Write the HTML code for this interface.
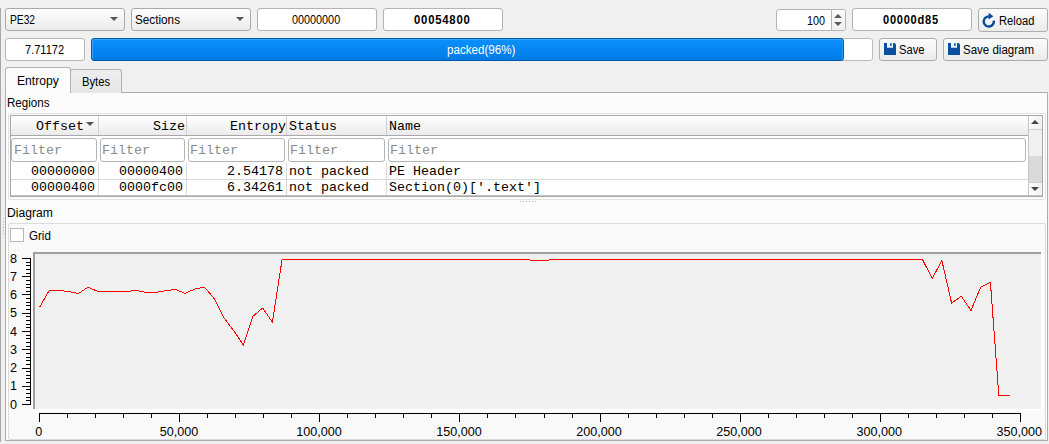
<!DOCTYPE html>
<html><head><meta charset="utf-8">
<style>
*{box-sizing:border-box;margin:0;padding:0}
html,body{width:1049px;height:444px;overflow:hidden;background:#f0f0f0}
body{position:relative;font-family:"Liberation Sans",sans-serif;font-size:11.5px;color:#000}
.a{position:absolute}
.cb{position:absolute;border:1px solid #a9a9a9;border-radius:3px;background:linear-gradient(#fdfdfd,#ececec)}
.le{position:absolute;border:1px solid #b4b4b4;border-radius:3px;background:#fff}
.btn{position:absolute;border:1px solid #adadad;border-radius:3px;background:linear-gradient(#fcfcfc,#ebebeb)}
.t{position:absolute;white-space:pre;line-height:1}
.s{font-size:12px;transform-origin:0 0}
.mono{font-family:"Liberation Mono",monospace;font-size:13.33px}
.arr{position:absolute;width:0;height:0;border-left:4px solid transparent;border-right:4px solid transparent;border-top:4px solid #555}
</style></head><body>
<!-- left edge -->
<div class="a" style="left:0;top:8px;width:1px;height:434px;background:#a8a8a8"></div>

<!-- top row -->
<div class="cb" style="left:5px;top:8px;width:120px;height:23px"></div>
<div class="t s" style="left:9.95px;top:14px;transform:scaleX(0.854)">PE32</div>
<div class="arr" style="left:109.5px;top:17px"></div>

<div class="cb" style="left:131px;top:8px;width:120px;height:23px"></div>
<div class="t s" style="left:135.02px;top:14px;transform:scaleX(0.978)">Sections</div>
<div class="arr" style="left:235.5px;top:17px"></div>

<div class="le" style="left:257px;top:8px;width:120px;height:23px"></div>
<div class="t s" style="left:292.2px;top:14px;transform:scaleX(0.902)">00000000</div>

<div class="le" style="left:383px;top:8px;width:120px;height:23px"></div>
<div class="t s" style="left:413.9px;top:14px;transform:scaleX(0.946);font-weight:bold;letter-spacing:0.8px">00054800</div>

<div class="le" style="left:776px;top:9px;width:70px;height:22px"></div>
<div class="t s" style="left:807.0px;top:15px;transform:scaleX(0.9)">100</div>
<div class="a" style="left:831px;top:10px;width:14px;height:20px;border-left:1px solid #b4b4b4;background:linear-gradient(#fcfcfc,#eeeeee);border-radius:0 2px 2px 0"></div>
<div class="a" style="left:834px;top:14px;width:0;height:0;border-left:4px solid transparent;border-right:4px solid transparent;border-bottom:4px solid #5a5a5a"></div>
<div class="arr" style="left:834px;top:22px;border-top-color:#5a5a5a"></div>

<div class="le" style="left:852px;top:8px;width:120px;height:23px"></div>
<div class="t s" style="left:883.3px;top:14px;transform:scaleX(0.923);font-weight:bold;letter-spacing:0.8px">00000d85</div>

<div class="btn" style="left:978px;top:8px;width:70px;height:24px"></div>
<div class="t s" style="left:998.87px;top:15px;transform:scaleX(0.932)">Reload</div>

<!-- row 2 -->
<div class="le" style="left:5px;top:38px;width:80px;height:23px"></div>
<div class="t s" style="left:25.2px;top:44px;transform:scaleX(0.921)">7.71172</div>

<div class="a" style="left:91px;top:38px;width:782px;height:23px;border:1px solid #bcbcbc;border-radius:3px;background:#fff"></div>
<div class="a" style="left:91px;top:38px;width:753px;height:23px;border:1px solid #0059ab;border-radius:3px;background:linear-gradient(#0b90fb,#0786f3 50%,#007be4);box-shadow:inset 1px 1px 0 #3aa4ff,inset -1px 0 0 #2a9cff"></div>
<div class="t s" style="left:447.3px;top:44px;transform:scaleX(0.967);color:#fff">packed(96%)</div>

<div class="btn" style="left:879px;top:38px;width:58px;height:23px"></div>
<div class="t s" style="left:899.07px;top:44px;transform:scaleX(0.935)">Save</div>

<div class="btn" style="left:943px;top:38px;width:105px;height:23px"></div>
<div class="t s" style="left:963.04px;top:44px;transform:scaleX(0.959)">Save diagram</div>

<svg class="a" style="left:0;top:0" width="1049" height="70">
<path d="M988.8 16.4 A5.1 5.1 0 1 0 993.8 20.6" fill="none" stroke="#0d4c9c" stroke-width="2.5"/>
<path d="M988.6 12.8 L993.4 16.2 L988.6 19.6 Z" fill="#0d4c9c"/>
<g fill="#0b4fa3">
<path d="M884 43 H894.5 L896 44.5 V55 H884 Z M887 43 V47.8 H893 V43 Z" fill-rule="evenodd"/>
<rect x="890" y="43.3" width="1.7" height="2.5"/>
<path d="M948 43 H958.5 L960 44.5 V55 H948 Z M951 43 V47.8 H957 V43 Z" fill-rule="evenodd"/>
<rect x="954" y="43.3" width="1.7" height="2.5"/>
</g>
</svg>
<!-- tabs -->
<div class="a" style="left:5px;top:92px;width:1043px;height:349px;border:1px solid #acacac;background:#fcfcfc"></div>
<div class="a" style="left:70px;top:69px;width:52px;height:24px;border:1px solid #b4b4b4;border-bottom:none;background:linear-gradient(#eeeeee,#e6e6e6);border-radius:3px 3px 0 0"></div>
<div class="a" style="left:5px;top:67px;width:66px;height:26px;border:1px solid #b4b4b4;border-bottom:none;background:#fcfcfc;border-radius:3px 3px 0 0"></div>
<div class="t s" style="left:17.39px;top:75px;transform:scaleX(1.012)">Entropy</div>
<div class="t s" style="left:81.67px;top:76px;transform:scaleX(0.934)">Bytes</div>

<div class="t s" style="left:7.43px;top:97px;transform:scaleX(0.965)">Regions</div>

<!-- table -->
<div class="a" style="left:8px;top:113px;width:1038px;height:87px;border:1px solid #e2e2e2;border-radius:2px"></div>
<div class="a" style="left:10px;top:115px;width:1033px;height:82px;border:1px solid #a8a8a8;background:#fff"></div>
<div class="a" style="left:11px;top:116px;width:1017px;height:19px;background:linear-gradient(#ffffff,#ebebeb)"></div>
<div class="a" style="left:11px;top:135px;width:1017px;height:1px;background:#a8a8a8"></div>
<div class="a" style="left:98px;top:116px;width:1px;height:19px;background:#d0d0d0"></div>
<div class="a" style="left:186px;top:116px;width:1px;height:19px;background:#d0d0d0"></div>
<div class="a" style="left:286px;top:116px;width:1px;height:19px;background:#d0d0d0"></div>
<div class="a" style="left:386px;top:116px;width:1px;height:19px;background:#d0d0d0"></div>
<div class="t mono" style="left:11px;width:73px;text-align:right;top:120px">Offset</div>
<div class="arr" style="left:86px;top:122px;border-left-width:4px;border-right-width:4px;border-top-width:4px"></div>
<div class="t mono" style="left:99px;width:86px;text-align:right;top:120px">Size</div>
<div class="t mono" style="left:187px;width:99px;text-align:right;top:120px">Entropy</div>
<div class="t mono" style="left:289px;top:120px">Status</div>
<div class="t mono" style="left:389px;top:120px">Name</div>
<!-- filters -->
<div class="le" style="left:11px;top:138px;width:86px;height:24px"></div>
<div class="le" style="left:100px;top:138px;width:85px;height:24px"></div>
<div class="le" style="left:188px;top:138px;width:97px;height:24px"></div>
<div class="le" style="left:288px;top:138px;width:97px;height:24px"></div>
<div class="le" style="left:388px;top:138px;width:638px;height:24px"></div>
<div class="t mono" style="left:14px;top:144px;color:#8a8a8a">Filter</div>
<div class="t mono" style="left:102px;top:144px;color:#8a8a8a">Filter</div>
<div class="t mono" style="left:190px;top:144px;color:#8a8a8a">Filter</div>
<div class="t mono" style="left:290px;top:144px;color:#8a8a8a">Filter</div>
<div class="t mono" style="left:390px;top:144px;color:#8a8a8a">Filter</div>
<!-- rows -->
<div class="a" style="left:11px;top:179px;width:1017px;height:1px;background:#d8d8d8"></div>
<div class="a" style="left:98px;top:163px;width:1px;height:33px;background:#d8d8d8"></div>
<div class="a" style="left:186px;top:163px;width:1px;height:33px;background:#d8d8d8"></div>
<div class="a" style="left:286px;top:163px;width:1px;height:33px;background:#d8d8d8"></div>
<div class="a" style="left:386px;top:163px;width:1px;height:33px;background:#d8d8d8"></div>
<div class="t mono" style="left:11px;width:84px;text-align:right;top:165px">00000000</div>
<div class="t mono" style="left:99px;width:84px;text-align:right;top:165px">00000400</div>
<div class="t mono" style="left:187px;width:96px;text-align:right;top:165px">2.54178</div>
<div class="t mono" style="left:289px;top:165px">not packed</div>
<div class="t mono" style="left:389px;top:165px">PE Header</div>
<div class="t mono" style="left:11px;width:84px;text-align:right;top:181px">00000400</div>
<div class="t mono" style="left:99px;width:84px;text-align:right;top:181px">0000fc00</div>
<div class="t mono" style="left:187px;width:96px;text-align:right;top:181px">6.34261</div>
<div class="t mono" style="left:289px;top:181px">not packed</div>
<div class="t mono" style="left:389px;top:181px">Section(0)['.text']</div>
<!-- scrollbar -->
<div class="a" style="left:1028px;top:116px;width:14px;height:80px;background:#f0f0f0;border-left:1px solid #c6c6c6"></div>
<div class="a" style="left:1028px;top:116px;width:14px;height:14px;background:linear-gradient(90deg,#fdfdfd,#f2f2f2);border-left:1px solid #c6c6c6;border-bottom:1px solid #d0d0d0"></div>
<div class="a" style="left:1031px;top:120px;width:0;height:0;border-left:4px solid transparent;border-right:4px solid transparent;border-bottom:4px solid #444"></div>
<div class="a" style="left:1029px;top:156px;width:13px;height:26px;background:#dadada"></div>
<div class="a" style="left:1028px;top:182px;width:14px;height:14px;background:linear-gradient(90deg,#fdfdfd,#f2f2f2);border-left:1px solid #c6c6c6;border-top:1px solid #d0d0d0"></div>
<div class="arr" style="left:1031px;top:187px;border-top-color:#444"></div>
<div class="a" style="left:11px;top:195px;width:1031px;height:1px;background:#c2c2c2"></div>
<!-- splitter dots -->
<div class="a" style="left:520px;top:201px;width:17px;height:1px;background:repeating-linear-gradient(90deg,#b0b0b0 0 1px,transparent 1px 3px)"></div>

<div class="a" style="left:3px;top:218px;width:1px;height:17px;background:repeating-linear-gradient(180deg,#b4b4b4 0 1px,transparent 1px 3px)"></div>
<div class="t s" style="left:7.39px;top:207px;transform:scaleX(1.009)">Diagram</div>
<!-- group box -->
<div class="a" style="left:8px;top:223px;width:1038px;height:217px;border:1px solid #dcdcdc;border-radius:2px;background:#f9f9f9"></div>
<div class="a" style="left:10px;top:228px;width:14px;height:14px;border:1px solid #b8b8b8;background:#fff"></div>
<div class="t s" style="left:29.4px;top:230px;transform:scaleX(0.964)">Grid</div>

<!-- chart -->
<svg class="a" style="left:0;top:0" width="1049" height="444">
<rect x="33" y="252" width="1010" height="159" fill="#ffffff"/>
<rect x="33" y="252" width="1008" height="157" fill="#a0a0a0"/>
<rect x="35" y="254" width="1006" height="155" fill="#f0f0f0"/>
<polyline points="39.5,307.4 49.2,290.5 58.9,290.5 68.6,291.4 78.3,293.6 88.0,287.2 97.7,291.4 107.4,291.4 117.1,291.4 126.8,291.4 136.5,290.5 146.2,292.4 155.9,292.4 165.6,290.7 175.3,289.4 185.0,293.4 194.7,289.1 204.5,287.1 214.2,298.6 223.9,317.8 233.6,330.5 243.3,344.9 253.0,316.2 262.7,308.0 272.4,322.2 282.1,259.5 291.8,259.5 301.5,259.5 311.2,259.5 320.9,259.5 330.6,259.5 340.3,259.5 350.0,259.5 359.7,259.5 369.4,259.5 379.1,259.5 388.8,259.5 398.5,259.5 408.2,259.5 417.9,259.5 427.6,259.5 437.3,259.5 447.0,259.5 456.7,259.5 466.4,259.5 476.1,259.5 485.8,259.5 495.5,259.5 505.2,259.5 514.9,259.5 524.6,259.5 534.4,260.5 544.1,260.5 553.8,259.5 563.5,259.5 573.2,259.5 582.9,259.5 592.6,259.5 602.3,259.5 612.0,259.5 621.7,259.5 631.4,259.5 641.1,259.5 650.8,259.5 660.5,259.5 670.2,259.5 679.9,259.5 689.6,259.5 699.3,259.5 709.0,259.5 718.7,259.5 728.4,259.5 738.1,259.5 747.8,259.5 757.5,259.5 767.2,259.5 776.9,259.5 786.6,259.5 796.3,259.5 806.0,259.5 815.7,259.5 825.4,259.5 835.1,259.5 844.8,259.5 854.6,259.5 864.3,259.5 874.0,259.5 883.7,259.5 893.4,259.5 903.1,259.5 912.8,259.5 922.5,259.5 932.2,278.5 941.9,260.6 951.6,303.0 961.3,296.3 971.0,310.5 980.7,287.0 990.4,282.3 998.8,395.2 1009.8,395.2" fill="none" stroke="#ff0000" stroke-width="1" shape-rendering="crispEdges"/>
<g fill="#000">
<rect x="30" y="258" width="1" height="147"/>
<rect x="22" y="404" width="9" height="1"/>
<rect x="26" y="400" width="5" height="1"/>
<rect x="26" y="397" width="5" height="1"/>
<rect x="26" y="393" width="5" height="1"/>
<rect x="26" y="389" width="5" height="1"/>
<rect x="22" y="386" width="9" height="1"/>
<rect x="26" y="382" width="5" height="1"/>
<rect x="26" y="378" width="5" height="1"/>
<rect x="26" y="375" width="5" height="1"/>
<rect x="26" y="371" width="5" height="1"/>
<rect x="22" y="368" width="9" height="1"/>
<rect x="26" y="364" width="5" height="1"/>
<rect x="26" y="360" width="5" height="1"/>
<rect x="26" y="357" width="5" height="1"/>
<rect x="26" y="353" width="5" height="1"/>
<rect x="22" y="349" width="9" height="1"/>
<rect x="26" y="346" width="5" height="1"/>
<rect x="26" y="342" width="5" height="1"/>
<rect x="26" y="338" width="5" height="1"/>
<rect x="26" y="335" width="5" height="1"/>
<rect x="22" y="331" width="9" height="1"/>
<rect x="26" y="327" width="5" height="1"/>
<rect x="26" y="324" width="5" height="1"/>
<rect x="26" y="320" width="5" height="1"/>
<rect x="26" y="316" width="5" height="1"/>
<rect x="22" y="313" width="9" height="1"/>
<rect x="26" y="309" width="5" height="1"/>
<rect x="26" y="305" width="5" height="1"/>
<rect x="26" y="302" width="5" height="1"/>
<rect x="26" y="298" width="5" height="1"/>
<rect x="22" y="294" width="9" height="1"/>
<rect x="26" y="291" width="5" height="1"/>
<rect x="26" y="287" width="5" height="1"/>
<rect x="26" y="284" width="5" height="1"/>
<rect x="26" y="280" width="5" height="1"/>
<rect x="22" y="276" width="9" height="1"/>
<rect x="26" y="273" width="5" height="1"/>
<rect x="26" y="269" width="5" height="1"/>
<rect x="26" y="265" width="5" height="1"/>
<rect x="26" y="262" width="5" height="1"/>
<rect x="22" y="258" width="9" height="1"/>
<rect x="39" y="413" width="982" height="1"/>
<rect x="39" y="413" width="1" height="9"/>
<rect x="67" y="413" width="1" height="5"/>
<rect x="95" y="413" width="1" height="5"/>
<rect x="123" y="413" width="1" height="5"/>
<rect x="151" y="413" width="1" height="5"/>
<rect x="179" y="413" width="1" height="9"/>
<rect x="207" y="413" width="1" height="5"/>
<rect x="235" y="413" width="1" height="5"/>
<rect x="263" y="413" width="1" height="5"/>
<rect x="291" y="413" width="1" height="5"/>
<rect x="319" y="413" width="1" height="9"/>
<rect x="347" y="413" width="1" height="5"/>
<rect x="375" y="413" width="1" height="5"/>
<rect x="403" y="413" width="1" height="5"/>
<rect x="431" y="413" width="1" height="5"/>
<rect x="459" y="413" width="1" height="9"/>
<rect x="487" y="413" width="1" height="5"/>
<rect x="515" y="413" width="1" height="5"/>
<rect x="544" y="413" width="1" height="5"/>
<rect x="572" y="413" width="1" height="5"/>
<rect x="600" y="413" width="1" height="9"/>
<rect x="628" y="413" width="1" height="5"/>
<rect x="656" y="413" width="1" height="5"/>
<rect x="684" y="413" width="1" height="5"/>
<rect x="712" y="413" width="1" height="5"/>
<rect x="740" y="413" width="1" height="9"/>
<rect x="768" y="413" width="1" height="5"/>
<rect x="796" y="413" width="1" height="5"/>
<rect x="824" y="413" width="1" height="5"/>
<rect x="852" y="413" width="1" height="5"/>
<rect x="880" y="413" width="1" height="9"/>
<rect x="908" y="413" width="1" height="5"/>
<rect x="936" y="413" width="1" height="5"/>
<rect x="964" y="413" width="1" height="5"/>
<rect x="992" y="413" width="1" height="5"/>
<rect x="1020" y="413" width="1" height="9"/>
</g>
<g font-family="Liberation Sans" font-size="12.6" fill="#000">
<text x="10" y="408.5">0</text>
<text x="10" y="390.2">1</text>
<text x="10" y="372.0">2</text>
<text x="10" y="353.8">3</text>
<text x="10" y="335.5">4</text>
<text x="10" y="317.2">5</text>
<text x="10" y="299.0">6</text>
<text x="10" y="280.8">7</text>
<text x="10" y="262.5">8</text>
<text x="38.8" y="436" text-anchor="middle">0</text>
<text x="178.9" y="436" text-anchor="middle">50,000</text>
<text x="318.9" y="436" text-anchor="middle">100,000</text>
<text x="459.0" y="436" text-anchor="middle">150,000</text>
<text x="599.1" y="436" text-anchor="middle">200,000</text>
<text x="739.1" y="436" text-anchor="middle">250,000</text>
<text x="879.2" y="436" text-anchor="middle">300,000</text>
<text x="1019.3" y="436" text-anchor="middle">350,000</text>
</g></svg>
</body></html>
